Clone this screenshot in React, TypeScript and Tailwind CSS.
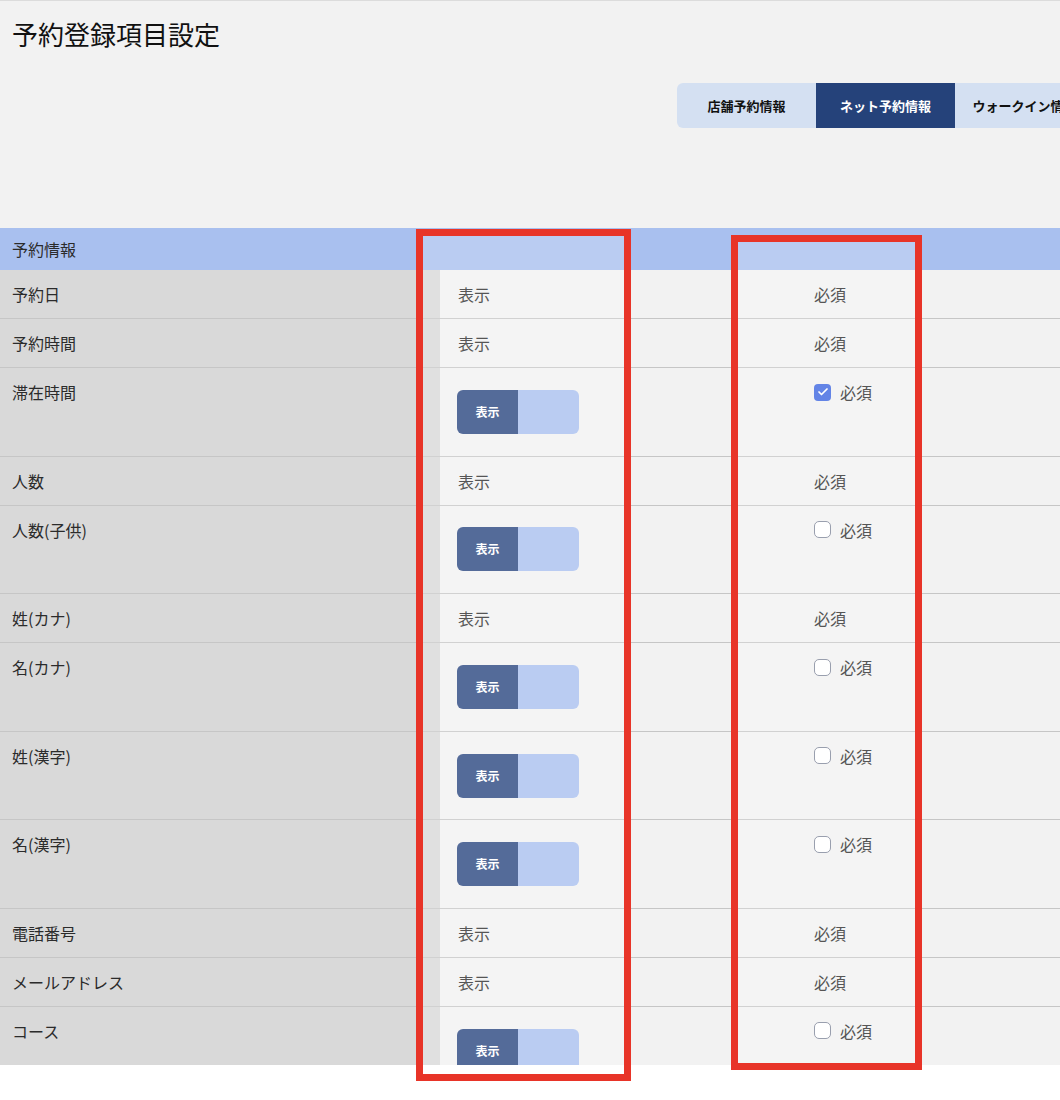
import { Check } from 'lucide-react';

type Row = {
  label: string;
  editable: boolean;
  required?: boolean;
};

const rows: Row[] = [
  { label: '予約日', editable: false },
  { label: '予約時間', editable: false },
  { label: '滞在時間', editable: true, required: true },
  { label: '人数', editable: false },
  { label: '人数(子供)', editable: true, required: false },
  { label: '姓(カナ)', editable: false },
  { label: '名(カナ)', editable: true, required: false },
  { label: '姓(漢字)', editable: true, required: false },
  { label: '名(漢字)', editable: true, required: false },
  { label: '電話番号', editable: false },
  { label: 'メールアドレス', editable: false },
  { label: 'コース', editable: true, required: false },
];

const tabs = ['店舗予約情報', 'ネット予約情報', 'ウォークイン情報'];

function Toggle() {
  return (
    <div className="flex h-[44px] w-[122px] overflow-hidden rounded-[6px]">
      <div className="flex w-[61px] items-center justify-center bg-[#2a4680] text-[12px] font-bold text-white">
        表示
      </div>
      <div className="flex-1 bg-[#a9c0ef]" />
    </div>
  );
}

function Checkbox({ checked }: { checked: boolean }) {
  return checked ? (
    <span className="flex h-[17px] w-[17px] items-center justify-center rounded-[4px] bg-[#3d66e0]">
      <Check className="h-[12px] w-[12px] text-white" strokeWidth={3.5} />
    </span>
  ) : (
    <span className="h-[17px] w-[17px] rounded-[5px] border border-[#80879a] bg-white" />
  );
}

export default function App() {
  return (
    <div className="min-h-screen bg-white font-['Noto_Sans_CJK_JP','Noto_Sans',sans-serif] text-[#2b2b2b]">
      <div className="relative">
        <div className="h-[1065px] overflow-hidden border-t border-[#dcdcdc] bg-[#f2f2f2]">
          {/* Header */}
          <div className="h-[227px]">
            <h1 className="pl-3 pt-[16px] text-[26px] leading-[34px] text-[#111]">予約登録項目設定</h1>
            <div className="mt-[32px] flex whitespace-nowrap pl-[677px]">
              {tabs.map((t, i) => (
                <div
                  key={t}
                  className={
                    i === 1
                      ? 'flex h-[45px] w-[139px] shrink-0 items-center justify-center bg-[#25427a] text-[13px] font-bold text-white'
                      : i === 0
                        ? 'flex h-[45px] w-[139px] shrink-0 items-center justify-center rounded-l-[6px] bg-[#d4e0f2] text-[13px] font-bold text-[#111]'
                        : 'flex h-[45px] w-[139px] shrink-0 items-center justify-center bg-[#d4e0f2] text-[13px] font-bold text-[#111]'
                  }
                >
                  {t}
                </div>
              ))}
            </div>
          </div>

          {/* Table */}
          <div className="h-[42px] bg-[#a9c0ef] pl-3 text-[16px] leading-[42px]">予約情報</div>
          {rows.map((r) => (
            <div
              key={r.label}
              className={
                r.editable
                  ? 'grid h-[88.6px] grid-cols-[440px_356px_1fr] border-b border-[#c6c6c6] text-[16px] leading-[24px]'
                  : 'grid h-[49px] grid-cols-[440px_356px_1fr] border-b border-[#c6c6c6] text-[16px] leading-[24px]'
              }
            >
              <div className="bg-[#d9d9d9] pl-3 pt-3">{r.label}</div>
              {r.editable ? (
                <div className="flex items-center pl-[17px]">
                  <Toggle />
                </div>
              ) : (
                <div className="pl-[18px] pt-3">表示</div>
              )}
              {r.editable ? (
                <div className="flex items-start gap-[9px] pl-[18px] pt-3">
                  <span className="flex h-[24px] items-center">
                    <Checkbox checked={!!r.required} />
                  </span>
                  必須
                </div>
              ) : (
                <div className="pl-[18px] pt-3">必須</div>
              )}
            </div>
          ))}
        </div>

        {/* annotation boxes */}
        <div className="absolute left-[416px] top-[229px] h-[852px] w-[215px] border-[7px] border-[#e83428] bg-white/20" />
        <div className="absolute left-[731px] top-[235px] h-[835px] w-[191px] border-[7px] border-[#e83428] bg-white/20" />
      </div>
    </div>
  );
}
